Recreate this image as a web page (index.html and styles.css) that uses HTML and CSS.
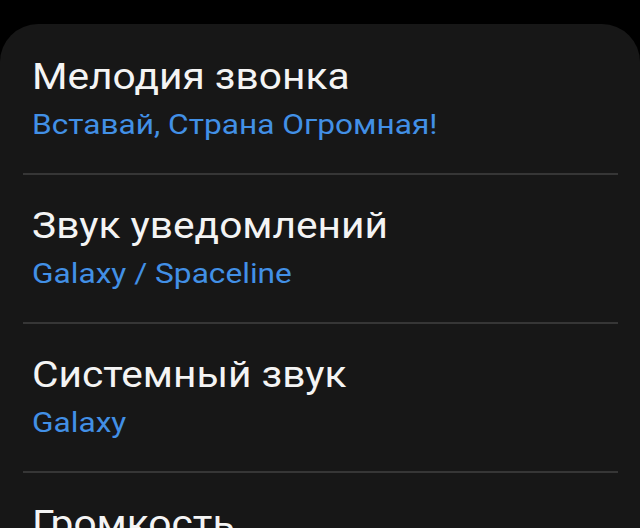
FILE: index.html
```html
<!DOCTYPE html>
<html lang="ru">
<head>
<meta charset="utf-8">
<title>Звуки</title>
<link rel="stylesheet" href="styles.css">
</head>
<body>
<div class="card">
  <ul class="list">
    <li class="item">
      <div class="title">Мелодия звонка</div>
      <div class="sub">Вставай, Страна Огромная!</div>
    </li>
    <li class="item">
      <div class="title">Звук уведомлений</div>
      <div class="sub">Galaxy / Spaceline</div>
    </li>
    <li class="item">
      <div class="title">Системный звук</div>
      <div class="sub">Galaxy</div>
    </li>
    <li class="item">
      <div class="title">Громкость</div>
    </li>
  </ul>
</div>
</body>
</html>
```
FILE: styles.css
```css
html, body {
  margin: 0;
  padding: 0;
  background: #000;
  height: 100%;
  overflow: hidden;
}
body {
  font-family: Roboto, "Noto Sans", sans-serif;
  -webkit-font-smoothing: antialiased;
}
.card {
  margin-top: 24px;
  background: #171717;
  border-radius: 38px 38px 0 0;
  height: 504px;
  overflow: hidden;
}
.list {
  list-style: none;
  margin: 0;
  padding: 0 22px 0 23px;
}
.item {
  padding: 29px 0 31px 9px;
  border-top: 2px solid #363636;
}
.item:first-child {
  border-top: none;
  padding-top: 31px;
}
.title,
.sub {
  width: fit-content;
  transform: scaleX(1.13);
  transform-origin: left center;
}
.title {
  color: #f4f4f4;
  font-size: 36px;
  line-height: 44px;
}
.sub {
  margin-top: 9px;
  color: #4290e6;
  font-size: 28px;
  line-height: 34px;
}
```
